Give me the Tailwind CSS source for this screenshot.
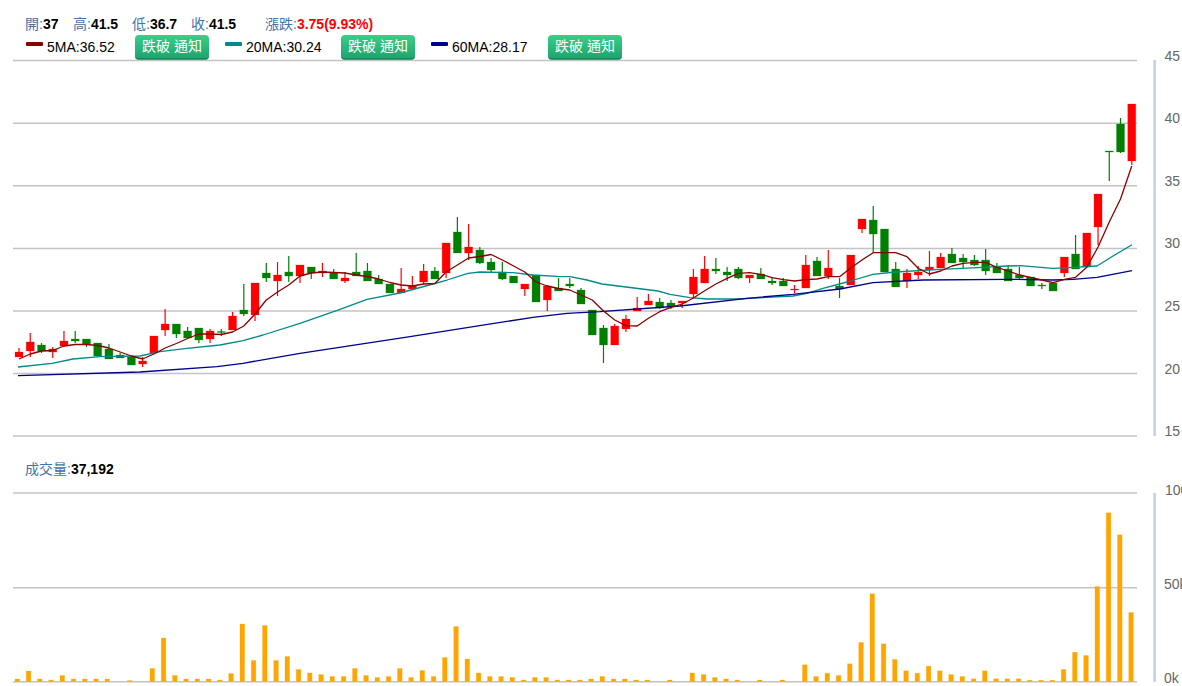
<!DOCTYPE html>
<html lang="zh-Hant">
<head>
  <meta charset="UTF-8" />
  <title>K線圖</title>
  <script src="https://cdn.jsdelivr.net/npm/@tailwindcss/browser@4"></script>
</head>
<body class="bg-white w-[1182px] h-[686px] overflow-hidden font-['Liberation_Sans','Noto_Sans_CJK_TC',sans-serif] text-[14px] text-black">

  <!-- Header: OHLC + MA legend -->
  <div class="h-[60px] flex flex-col">
    <div class="flex h-[35px] items-end pb-[3px] pl-[25px] leading-[16px] text-[#4572a7]">
      <span class="w-[48px]">開:<b class="text-black">37</b></span>
      <span class="w-[59px]">高:<b class="text-black">41.5</b></span>
      <span class="w-[59px]">低:<b class="text-black">36.7</b></span>
      <span class="w-[74px]">收:<b class="text-black">41.5</b></span>
      <span>漲跌:<b class="text-[#ff0000]">3.75(9.93%)</b></span>
    </div>
    <div class="flex h-[25px] items-center">
      <span class="ml-[26px] w-[17px] h-[4px] -mt-[7px] rounded-[1px] bg-[#8b0000]"></span>
      <span class="ml-[4px] w-[88px]">5MA:36.52</span>
      <button class="w-[74px] h-[25px] rounded-[4px] border-b-2 border-[#178a5c] bg-gradient-to-b from-[#38d087] to-[#1fa46f] text-white">跌破 通知</button>
      <span class="ml-[16px] w-[17px] h-[4px] -mt-[7px] rounded-[1px] bg-[#008b8b]"></span>
      <span class="ml-[4px] w-[95px]">20MA:30.24</span>
      <button class="w-[74px] h-[25px] rounded-[4px] border-b-2 border-[#178a5c] bg-gradient-to-b from-[#38d087] to-[#1fa46f] text-white">跌破 通知</button>
      <span class="ml-[16px] w-[17px] h-[4px] -mt-[7px] rounded-[1px] bg-[#00008b]"></span>
      <span class="ml-[4px] w-[96px]">60MA:28.17</span>
      <button class="w-[74px] h-[25px] rounded-[4px] border-b-2 border-[#178a5c] bg-gradient-to-b from-[#38d087] to-[#1fa46f] text-white">跌破 通知</button>
    </div>
  </div>

  <!-- Price chart -->
  <svg id="price" class="block overflow-visible" width="1182" height="380" viewBox="0 60 1182 380">
    <g id="priceGrid" stroke="#c4c4c4" stroke-width="1.5">
      <line x1="13" x2="1137" y1="60.5" y2="60.5" />
      <line x1="13" x2="1137" y1="123.2" y2="123.2" />
      <line x1="13" x2="1137" y1="185.8" y2="185.8" />
      <line x1="13" x2="1137" y1="248.4" y2="248.4" />
      <line x1="13" x2="1137" y1="311" y2="311" />
      <line x1="13" x2="1137" y1="373.6" y2="373.6" />
      <line x1="13" x2="1137" y1="436" y2="436" />
    </g>
    <rect x="1153.3" y="60" width="2.7" height="376" fill="#c6d4e6" />
    <g class="fill-[#666666] text-[14px]">
      <text x="1164.5" y="61">45</text>
      <text x="1164.5" y="123">40</text>
      <text x="1164.5" y="186">35</text>
      <text x="1164.5" y="248">30</text>
      <text x="1164.5" y="311">25</text>
      <text x="1164.5" y="374">20</text>
      <text x="1164.5" y="436">15</text>
    </g>
    <g id="candles"></g>
    <g id="maLines" fill="none" stroke-width="1.3" stroke-linejoin="round"></g>
  </svg>

  <!-- Volume label -->
  <div class="h-[46px] pl-[25px] pt-[21px] leading-[16px] text-[#4572a7]">成交量:<b class="text-black">37,192</b></div>

  <!-- Volume chart -->
  <svg id="volume" class="block overflow-visible" width="1182" height="200" viewBox="0 486 1182 200">
    <g stroke="#c4c4c4" stroke-width="1.5">
      <line x1="13" x2="1137" y1="493" y2="493" />
      <line x1="13" x2="1137" y1="587.7" y2="587.7" />
      <line x1="13" x2="1137" y1="681.8" y2="681.8" />
    </g>
    <rect x="1153.3" y="493" width="2.7" height="189" fill="#c6d4e6" />
    <g class="fill-[#666666] text-[14px]">
      <text x="1165" y="495">100k</text>
      <text x="1164" y="589">50k</text>
      <text x="1164" y="683">0k</text>
    </g>
    <g id="bars"></g>
  </svg>

  <script>
    const NS = 'http://www.w3.org/2000/svg';

    // [high, body top, body bottom, low, colour], in picture pixels
    const candles = [
      [348,352,357,357,'r'],[333,342,351,357,'r'],[343,345,351,353,'g'],[347,349,352,358,'r'],[331,341,346,347,'r'],
      [331,339,341,343,'g'],[339,339,344,347,'g'],[343,343,356,357,'g'],[344,349,359,359,'g'],[353,355,358,358,'g'],
      [357,357,365,365,'g'],[357,361,364,367,'r'],[336,336,353,353,'r'],[309,324,330,336,'r'],[324,324,334,338,'g'],
      [327,331,338,338,'g'],[328,328,340,343,'g'],[329,331,339,343,'r'],[329,331.5,332.5,336,'g'],[312,316,330,330,'r'],
      [284,310,314,316,'g'],[283,283,315,321,'r'],[263,273,278,282,'g'],[262,275,281,296,'r'],[256,272,276,282,'g'],
      [265,265,276,283,'r'],[267,267,273,279,'g'],[263,271,273,277,'r'],[269,273,279,279,'g'],[272,278,281,283,'r'],
      [253,272,276,276,'g'],[263,271,281,281,'g'],[275,279,284,284,'g'],[284,284,293,293,'g'],[268,289,293,293,'r'],
      [276,286,289,289,'r'],[264,271,282,284,'r'],[267,271,279,279,'g'],[243,243,273,278,'r'],[217,232,253,253,'g'],
      [224,247,253,260,'r'],[247,250,263,264,'g'],[258,262,270,272,'g'],[262,272,279,280,'g'],[276,276,283,283,'g'],
      [284,284,289,296,'r'],[275,275,302,302,'g'],[285,286,300,311,'r'],[278,288,291,291,'g'],[278,284,286,288,'g'],
      [288,290,304,304,'g'],[310,310,335,335,'g'],[325,328,345,363,'g'],[324,326,345,345,'r'],[315,319,329,332,'r'],
      [297,308,311,311,'r'],[294,301,305,305,'r'],[298,302,308,309,'g'],[300,303,307,309,'g'],[301,301,303,308,'r'],
      [269,277,294,298,'r'],[256,269,283,283,'r'],[258,269,271,274,'g'],[267,272,275,281,'g'],[267,269,278,279,'g'],
      [275,275,278,283,'r'],[268,274,279,279,'g'],[277,281,283,285,'g'],[278,281,286,286,'g'],[285,289,290,293,'r'],
      [255,265,288,288,'r'],[257,261,276,276,'g'],[250,268,276,279,'r'],[278,286,289,298,'g'],[255,255,285,285,'r'],
      [219,219,229,233,'r'],[206,220,234,253,'g'],[229,229,272,272,'g'],[262,269,287,287,'g'],[269,273,281,288,'r'],
      [266,272,275,279,'r'],[251,267,270,276,'r'],[253,257,268,268,'r'],[248,254,263,263,'g'],[254,258,262,268,'g'],
      [255,260,265,266,'g'],[249,260,271,275,'g'],[263,267,273,273,'g'],[265,269,281,281,'g'],[267,275,278,279,'g'],
      [277,277,286,286,'g'],[283,285,286,289,'g'],[283,283,291,291,'g'],[257,257,273,277,'r'],[235,254,269,269,'g'],
      [233,233,267,267,'r'],[194,194,227,245,'r'],[151,151,152,181,'g'],[118,124,152,153,'g'],[104,104,161,165,'r']
    ];

    const ma5 = [359,354,351,350.5,346,344.5,344.5,345.5,348,352,356,359,354,348,343.5,338.5,334,334,334.5,332,326,314,300,292,285,276,
      273,272,272.5,273,275,276.5,279,282.5,285,286,284,283.5,272,265,258,256.5,254.5,260,266,272,282,286,288.5,290,295,300,
      311,320,325.7,326,318.3,311.7,307.3,304,298,290.7,284,278.3,273.3,272.7,274.3,277.7,279.7,281,279.7,279,276.7,276.7,268,260,252.7,
      252.7,252.7,256.7,268.3,274,271,266,263.3,262.3,262.3,267.3,271,275,277.3,280,282.7,279.3,277.3,267.3,247,222,199,166];

    const ma20 = [[18,367],[52,363.3],[73,359],[100,356.7],[140,356],[160,351.7],[187,348.3],[220,345],[243,340.7],[263,335],[300,323.3],
      [340,309.3],[367,299.3],[400,293],[433,284],[447,280],[468,273.3],[480,272],[513,272.7],[533,275],[557,276.3],[570,276.7],[587,280],
      [602,284],[658,291],[670,294.3],[690,297.7],[707,299],[737,299],[793,296],[807,293.3],[823,288.3],[847,282],[873,274.3],[895,272],
      [940,269.3],[983,267.3],[1007,266],[1020,265.7],[1053,268.3],[1073,267.3],[1097,266],[1113,256],[1132,244.7]];

    const ma60 = [[18,375.7],[140,372],[217,366.7],[243,363.3],[300,353.3],[410,336.7],[467,327.7],[533,317.3],[567,313.3],[600,311.7],
      [680,306],[747,298.3],[793,294.3],[840,289],[873,282.7],[923,280],[1007,279.3],[1053,280],[1073,279.3],[1097,277.3],[1132,270.7]];

    const volumes = [2.5,10.5,2.5,1.5,6,2.5,2.5,2.5,2.5,0,1,0,13,43.5,6,2.5,2.5,2.5,1.5,8,57.5,21,56,21,25,12,8.5,7,5,5,13,6,4,5,13,
      4,11,5,24,55,22.5,8.5,5,5,4,1.5,4,4,1.5,1.5,1.5,2.5,5,2.5,2.5,1.5,1.5,0,1.5,0,8.5,7,4,2.5,1.5,0,1.5,0,1.5,0,
      16.7,5,8.3,6,17.7,39,87.7,37.7,22,10.7,8.3,15.3,10.7,7,5,2.7,10.7,2.7,2.7,2.7,1.3,1.3,1.3,12,29.3,26,95,168.7,146.7,69];

    function add(parent, tag, attrs) {
      const el = document.createElementNS(NS, tag);
      for (const k in attrs) el.setAttribute(k, attrs[k]);
      parent.appendChild(el);
    }

    // Candles
    const candleGroup = document.getElementById('candles');
    candles.forEach((c, i) => {
      const x = 19 + 11.24 * i;
      const col = c[4] === 'r' ? '#ff0000' : '#007f00';
      add(candleGroup, 'line', { x1: x, x2: x, y1: c[0], y2: c[3], stroke: col, 'stroke-width': 1.2 });
      add(candleGroup, 'rect', { x: x - 4, y: c[1], width: 8, height: Math.max(c[2] - c[1], 1), fill: col, stroke: col, 'stroke-opacity': 0.25, 'stroke-width': 1 });
    });

    // Moving averages
    const maGroup = document.getElementById('maLines');
    const toPoints = pts => pts.map(p => p.join(',')).join(' ');
    add(maGroup, 'polyline', { stroke: '#008b8b', points: toPoints(ma20) });
    add(maGroup, 'polyline', { stroke: '#00008b', points: toPoints(ma60) });
    add(maGroup, 'polyline', { stroke: '#8b0000', points: toPoints(ma5.map((y, i) => [19 + 11.24 * i, y])) });

    // Volume bars
    const barGroup = document.getElementById('bars');
    volumes.forEach((h, i) => {
      if (!h) return;
      const x = 17.3 + 11.25 * i;
      add(barGroup, 'rect', { x: x - 2.3, y: 681.5 - h, width: 4.6, height: h, fill: '#ffa500', stroke: '#ffa500', 'stroke-opacity': 0.3, 'stroke-width': 0.8 });
    });
  </script>
</body>
</html>
